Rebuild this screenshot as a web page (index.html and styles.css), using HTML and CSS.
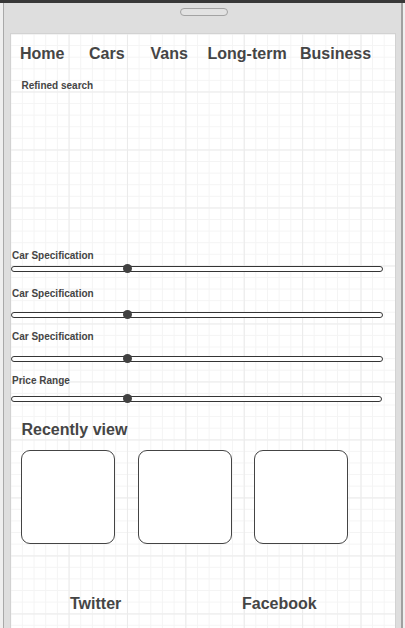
FILE: index.html
```html
<!DOCTYPE html>
<html lang="en">
<head>
<meta charset="utf-8">
<title>Car search mockup</title>
<link rel="stylesheet" href="styles.css">
</head>
<body>
<div class="topbar"></div>
<div class="device">
  <div class="speaker"></div>
  <div class="screen">
    <nav class="nav">
      <span>Home</span>
      <span>Cars</span>
      <span>Vans</span>
      <span>Long-term</span>
      <span>Business</span>
    </nav>
    <div class="refined">Refined search</div>
    <div class="filters">
      <div class="label l1">Car Specification</div>
      <div class="track t1"><span class="knob"></span></div>
      <div class="label l2">Car Specification</div>
      <div class="track t2"><span class="knob"></span></div>
      <div class="label l3">Car Specification</div>
      <div class="track t3"><span class="knob"></span></div>
      <div class="label l4">Price Range</div>
      <div class="track t4"><span class="knob"></span></div>
    </div>
    <h2 class="recent-title">Recently view</h2>
    <div class="recent">
      <div class="card"></div>
      <div class="card"></div>
      <div class="card"></div>
    </div>
    <div class="social">
      <span>Twitter</span>
      <span>Facebook</span>
    </div>
  </div>
</div>
</body>
</html>
```

FILE: styles.css
```css
html, body {
  margin: 0;
  padding: 0;
  overflow: hidden;
}
body {
  background: #efefef;
  font-family: "Liberation Sans", Arial, sans-serif;
  color: #454545;
  height: 628px;
}
.topbar {
  height: 3px;
  background: #383838;
}
.device {
  margin-left: 3px;
  width: 386px;
  height: 640px;
  background: #dedede;
  border-left: 1px solid #a9a9a9;
  border-right: 2px solid #a0a0a0;
  padding: 5px 5px 0 6px;
}
.speaker {
  width: 46px;
  height: 6px;
  margin: 0 auto 17px;
  border: 1px solid #a3a3a3;
  border-radius: 4px;
  background: #e2e2e2;
  position: relative;
  left: 1px;
}
.screen {
  height: 620px;
  border: 1px solid #d2d2d2;
  background-color: #ffffff;
  background-image:
    linear-gradient(to right, #ebebeb 1px, transparent 1px),
    linear-gradient(to bottom, #ebebeb 1px, transparent 1px),
    linear-gradient(to right, #f4f4f4 1px, transparent 1px),
    linear-gradient(to bottom, #f4f4f4 1px, transparent 1px);
  background-size: 58.4px 100%, 100% 58px, 11.68px 100%, 100% 11.6px;
  background-position: -0.8px -0.5px, -0.8px -0.5px, -0.8px -0.5px, -0.8px -0.5px;
}
.nav {
  display: grid;
  grid-template-columns: 69px 61.5px 57px 92.5px auto;
  padding: 10px 0 0 9px;
  font-size: 16px;
  line-height: 20px;
  font-weight: bold;
}
.refined {
  margin: 16px 0 0 10.5px;
  font-size: 10px;
  line-height: 12px;
  font-weight: bold;
}
.filters {
  margin-top: 158px;
}
.label {
  padding-left: 1px;
  font-size: 10px;
  line-height: 12px;
  font-weight: bold;
}
.l2 { margin-top: 16px; }
.l3, .l4 { margin-top: 13px; }
.track {
  position: relative;
  box-sizing: border-box;
  width: 372px;
  height: 6px;
  border: 1.5px solid #353535;
  border-radius: 3px;
  background: #ffffff;
}
.t1 { margin-top: 4px; }
.t2 { margin-top: 12px; }
.t3 { margin-top: 13px; }
.t4 { margin-top: 9px; width: 371px; }
.knob {
  position: absolute;
  left: 111px;
  top: -3.5px;
  width: 9px;
  height: 9px;
  border-radius: 50%;
  background: #414141;
}
.recent-title {
  margin: 18px 0 0 10.5px;
  font-size: 16px;
  line-height: 20px;
  font-weight: bold;
}
.recent {
  display: flex;
  gap: 22.5px;
  margin: 10px 0 0 10px;
}
.card {
  box-sizing: border-box;
  width: 94px;
  height: 94px;
  border: 1px solid #444444;
  border-radius: 9px;
  background: #ffffff;
}
.social {
  display: grid;
  grid-template-columns: 172px auto;
  margin: 49.5px 0 0 59px;
  font-size: 16px;
  line-height: 20px;
  font-weight: bold;
}
```
